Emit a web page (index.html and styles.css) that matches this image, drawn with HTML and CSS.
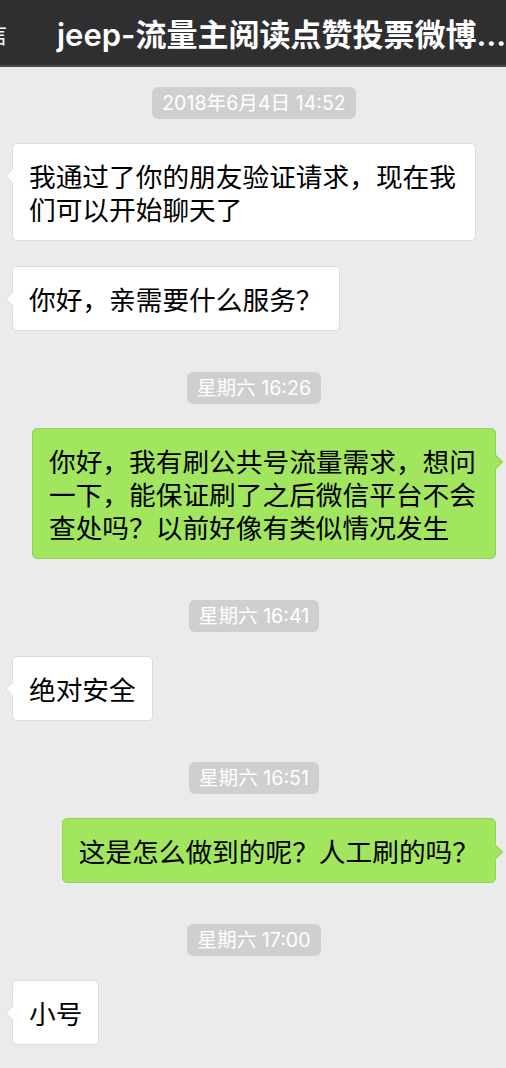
FILE: index.html
```html
<!DOCTYPE html>
<html lang="zh-CN">
<head>
    <meta charset="UTF-8">
    <meta name="viewport" content="width=device-width, initial-scale=1.0">
    <title>jeep-流量主阅读点赞投票微博</title>
    <link rel="stylesheet" href="styles.css">
</head>
<body>
    <div class="header">
        <span class="back">信</span>
        <span class="title">jeep-流量主阅读点赞投票微博…</span>
    </div>

    <div class="chat">
        <div class="time">2018年6月4日 14:52</div>
        <div class="msg left">我通过了你的朋友验证请求，现在我们可以开始聊天了</div>
        <div class="msg left">你好，亲需要什么服务？</div>

        <div class="time">星期六 16:26</div>
        <div class="msg right">你好，我有刷公共号流量需求，想问一下，能保证刷了之后微信平台不会查处吗？以前好像有类似情况发生</div>

        <div class="time">星期六 16:41</div>
        <div class="msg left">绝对安全</div>

        <div class="time">星期六 16:51</div>
        <div class="msg right">这是怎么做到的呢？人工刷的吗？</div>

        <div class="time">星期六 17:00</div>
        <div class="msg left">小号</div>
    </div>
</body>
</html>
```

FILE: styles.css
```css
body {
    margin: 0;
    padding: 0;
    background-color: #ebebeb;
    font-family: "Noto Sans CJK SC", sans-serif;
}
.header {
    display: flex;
    align-items: center;
    height: 65px;
    background: #2f2f31;
    border-bottom: 2px solid #4a4a4c;
    color: #fff;
    white-space: nowrap;
    overflow: hidden;
}
.back {
    margin-left: -16px;
    font-size: 23px;
}
.title {
    margin-left: 50px;
    font-family: Inter, "Noto Sans CJK SC", sans-serif;
    font-size: 31px;
    font-weight: 600;
}
.chat {
    display: flex;
    flex-direction: column;
    padding: 20px 10px 24px 12px;
}
.time {
    align-self: center;
    margin: 41px 0 24px;
    padding: 0 10px;
    height: 32px;
    line-height: 32px;
    border-radius: 6px;
    background: #cfcfcf;
    color: #fff;
    font-family: Inter, "Noto Sans CJK SC", sans-serif;
    font-size: 19.6px;
}
.time:first-child {
    margin-top: 0;
}
.msg {
    position: relative;
    max-width: 430px;
    padding: 15px 16px;
    border-radius: 5px;
    font-size: 26.7px;
    line-height: 33px;
    color: #000;
}
.msg + .msg {
    margin-top: 25px;
}
.msg::after {
    content: "";
    position: absolute;
    top: 27px;
    width: 9px;
    height: 9px;
    transform: rotate(45deg);
}
.left {
    align-self: flex-start;
    background: #fff;
    border: 1px solid #dcdcdc;
}
.left::after {
    left: -6px;
    background: #fff;
    border-left: 1px solid #dcdcdc;
    border-bottom: 1px solid #dcdcdc;
}
.right {
    align-self: flex-end;
    background: #a2e55f;
    border: 1px solid #93d553;
}
.right::after {
    right: -6px;
    top: 28px;
    background: #a2e55f;
    border-top: 1px solid #93d553;
    border-right: 1px solid #93d553;
}
```
